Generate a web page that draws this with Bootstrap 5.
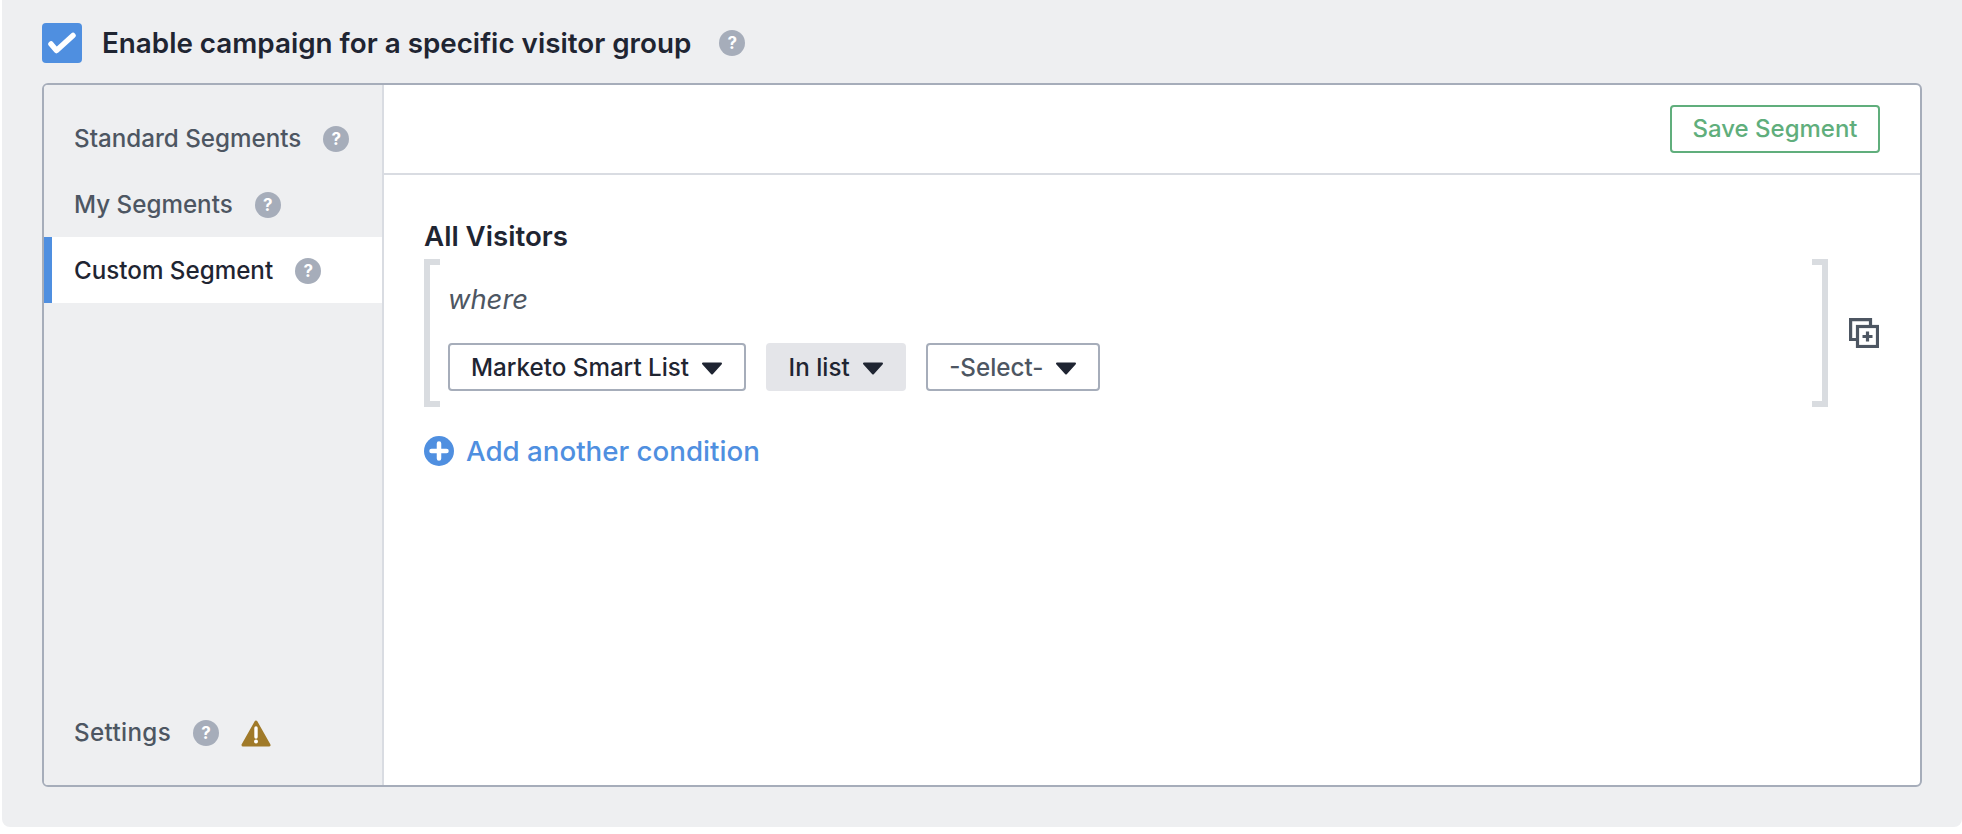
<!DOCTYPE html>
<html lang="en">
<head>
<meta charset="utf-8">
<title>Campaign segment</title>
<link rel="stylesheet" href="https://cdn.jsdelivr.net/npm/bootstrap@5.3.0/dist/css/bootstrap.min.css">
<style>
body { background: #fff; font-family: Inter, "Liberation Sans", sans-serif; color: #1f2532; overflow: hidden; }
.seg-shell { margin-left: 2px; height: 827px; padding: 23px 40px 40px; background: #eeeff1; border-radius: 0 0 8px 8px; display: flex; flex-direction: column; }
.seg-check { width: 40px; height: 40px; background: #4f8fe0; border-radius: 4px; flex: none; }
.seg-title { font-size: 27.8px; font-weight: 600; margin: 0 28px 0 20px; line-height: 40px; }
.seg-help { width: 26px; height: 26px; border-radius: 50%; background: #a6adba; color: #fff; font-size: 17px; font-weight: 700; letter-spacing: 0; line-height: 26px; text-align: center; flex: none; }
.seg-box { margin-top: 20px; height: 704px; border: 2px solid #a6adba; border-radius: 6px; overflow: hidden; background: #fff; }
.seg-side { width: 340px; flex: none; background: #eeeff1; border-right: 2px solid #d9dce2; padding: 20px 0; }
.seg-item { height: 66px; padding: 2px 0 0 30px; color: #4d5662; font-size: 24.2px; font-weight: 500; gap: 22px; }
.seg-item:hover { color: #4d5662; }
.seg-item.active-item { background: #fff; color: #1f2532; border-left: 8px solid #4f8fe0; padding-left: 22px; }
.seg-item-wide { letter-spacing: .35px; }
.seg-warn { flex: none; }
.seg-bar { height: 90px; border-bottom: 2px solid #d9dce2; padding: 0 40px 0 0; }
.seg-save { --bs-btn-color: #60ae7c; --bs-btn-border-color: #60ae7c; --bs-btn-hover-bg: #60ae7c; --bs-btn-hover-border-color: #60ae7c; --bs-btn-active-bg: #60ae7c; width: 210px; height: 48px; border-width: 2px; border-radius: 4px; font-size: 24px; font-weight: 500; padding: 0; }
.seg-body { padding: 41px 41px 0 40px; }
.seg-head { font-size: 27.7px; font-weight: 600; line-height: 40px; }
.seg-group { margin-top: 3px; height: 148px; }
.seg-bracket { width: 16px; flex: none; border: 6px solid #d9dce0; border-right: 0; }
.seg-bracket-end { transform: scaleX(-1); }
.seg-where { font-size: 27.4px; font-style: italic; color: #4d5662; line-height: 40px; margin-top: 20px; }
.seg-conds { margin-top: 24px; gap: 20px; }
.seg-rule { padding: 0 0 0 8px; }
.seg-drop { height: 48px; padding: 2px 21px 0; gap: 12px; border: 2px solid #a6adba; border-radius: 4px; background: #fff; font-size: 24.2px; font-weight: 500; color: #1f2532; }
.seg-drop.seg-soft { background: #e4e5e9; border-color: #e4e5e9; padding-left: 20.5px; padding-right: 20.5px; }
.seg-drop.seg-muted { color: #4d5662; }
.seg-copy { margin-left: 21px; flex: none; align-self: center; }
.seg-add { margin-top: 29px; gap: 12px; color: #4f8fe0; font-size: 27.7px; font-weight: 500; text-decoration: none; line-height: 30px; }
.seg-add:hover { color: #4f8fe0; }
</style>
</head>
<body>
<div class="seg-shell">
  <div class="d-flex align-items-center">
    <span class="seg-check d-flex align-items-center justify-content-center">
      <svg width="28" height="22" viewBox="0 0 28 22"><path d="M3 12 8.500 18.500 25 3.500" fill="none" stroke="#fff" stroke-width="5.500" stroke-linecap="round" stroke-linejoin="round"/></svg>
    </span>
    <span class="seg-title">Enable campaign for a specific visitor group</span>
    <span class="seg-help">?</span>
  </div>
  <div class="seg-box d-flex">
    <aside class="seg-side d-flex flex-column">
      <nav class="nav flex-column flex-grow-1">
        <a class="nav-link seg-item d-flex align-items-center" href="#">Standard Segments <span class="seg-help">?</span></a>
        <a class="nav-link seg-item d-flex align-items-center" href="#">My Segments <span class="seg-help">?</span></a>
        <a class="nav-link seg-item active-item d-flex align-items-center" href="#">Custom Segment <span class="seg-help">?</span></a>
        <a class="nav-link seg-item seg-item-wide d-flex align-items-center mt-auto" href="#">Settings <span class="seg-help">?</span>
          <svg class="seg-warn" width="30" height="27" viewBox="0 0 30 27"><path d="M15 2 28 25H2Z" fill="#a07a29" stroke="#a07a29" stroke-width="3" stroke-linejoin="round"/><path d="M15 8v9" stroke="#fff" stroke-width="3.400" stroke-linecap="round"/><circle cx="15" cy="21.500" r="2" fill="#fff"/></svg>
        </a>
      </nav>
    </aside>
    <main class="flex-grow-1">
      <div class="seg-bar d-flex align-items-center justify-content-end">
        <button type="button" class="btn btn-outline-success seg-save">Save Segment</button>
      </div>
      <div class="seg-body">
        <div class="seg-head">All Visitors</div>
        <div class="seg-group d-flex">
          <span class="seg-bracket"></span>
          <div class="seg-rule flex-grow-1">
            <div class="seg-where">where</div>
            <div class="seg-conds d-flex">
              <button type="button" class="btn seg-drop d-flex align-items-center">Marketo Smart List <svg width="22" height="13" viewBox="0 0 22 13"><path d="M2 1.500h18L11 11.500Z" fill="#1f2532" stroke="#1f2532" stroke-width="2" stroke-linejoin="round"/></svg></button>
              <button type="button" class="btn seg-drop seg-soft d-flex align-items-center">In list <svg width="22" height="13" viewBox="0 0 22 13"><path d="M2 1.500h18L11 11.500Z" fill="#1f2532" stroke="#1f2532" stroke-width="2" stroke-linejoin="round"/></svg></button>
              <button type="button" class="btn seg-drop seg-muted d-flex align-items-center">-Select- <svg width="22" height="13" viewBox="0 0 22 13"><path d="M2 1.500h18L11 11.500Z" fill="#1f2532" stroke="#1f2532" stroke-width="2" stroke-linejoin="round"/></svg></button>
            </div>
          </div>
          <span class="seg-bracket seg-bracket-end"></span>
          <svg class="seg-copy" width="30" height="30" viewBox="0 0 30 30" fill="none" stroke="#4d5662" stroke-width="3.200"><path d="M7 21.500H1.600V1.600H21.500V7"/><rect x="8.500" y="8.500" width="20" height="20"/><path d="M18.500 13.500v10M13.500 18.500h10"/></svg>
        </div>
        <a class="seg-add d-inline-flex align-items-center" href="#">
          <svg width="30" height="30" viewBox="0 0 30 30"><circle cx="15" cy="15" r="15" fill="#4f8fe0"/><path d="M15 7.500v15M7.500 15h15" stroke="#fff" stroke-width="4.500" stroke-linecap="round"/></svg>
          Add another condition
        </a>
      </div>
    </main>
  </div>
</div>
<script src="https://cdn.jsdelivr.net/npm/bootstrap@5.3.0/dist/js/bootstrap.bundle.min.js"></script>
</body>
</html>
